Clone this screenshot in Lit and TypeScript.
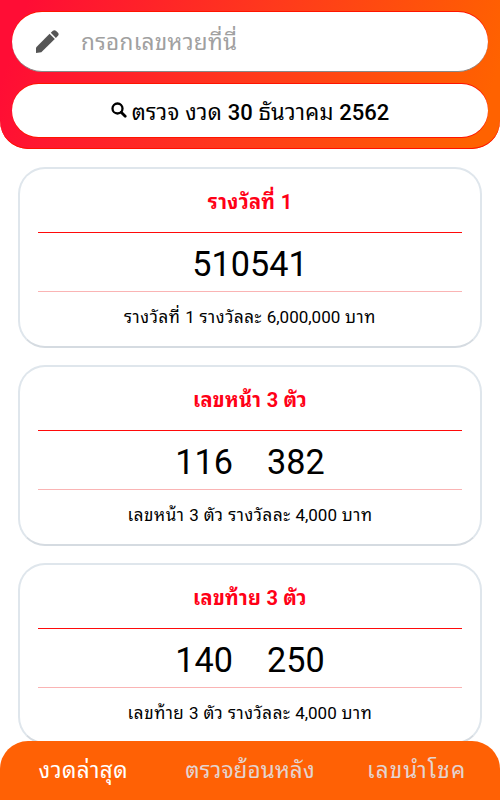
import { LitElement, html, css } from "lit";
import { customElement } from "lit/decorators.js";

interface Prize { title: string; numbers: string[]; note: string; }

const prizes: Prize[] = [
  { title: "รางวัลที่ 1", numbers: ["510541"], note: "รางวัลที่ 1 รางวัลละ 6,000,000 บาท" },
  { title: "เลขหน้า 3 ตัว", numbers: ["116", "382"], note: "เลขหน้า 3 ตัว รางวัลละ 4,000 บาท" },
  { title: "เลขท้าย 3 ตัว", numbers: ["140", "250"], note: "เลขท้าย 3 ตัว รางวัลละ 4,000 บาท" },
];

// Digits keep their natural spacing inside letter-spaced Thai text.
const withDigits = (text: string) =>
  text.split(/([\d,]+)/).map((part, i) => (i % 2 ? html`<span class="digits">${part}</span>` : part));

@customElement("app-root")
export class AppRoot extends LitElement {
  static styles = css`
    :host { display: flex; flex-direction: column; height: 800px; overflow: hidden; background: #fff; color: #000; font-family: Roboto, "Noto Sans Thai Looped", "Noto Looped Thai", "Loma", "Garuda", "Noto Sans Thai", "Noto Sans", sans-serif; }
    * { box-sizing: border-box; }
    .top { flex: none; height: 149px; padding: 12px; background: linear-gradient(108deg, #ff0d35 5%, #ff391c 50%, #ff6200 95%); border-radius: 0 0 28px 28px; box-shadow: inset 0 -1px #ff1000; display: flex; flex-direction: column; gap: 12px; }
    .field { flex: none; height: 60px; border-radius: 30px; border-bottom: 1px solid #888; box-shadow: 0 -1px #ff1400; background: #fff; display: flex; align-items: center; padding: 0 0 4px 24px; gap: 22px; font-size: 22.5px; letter-spacing: 0.3px; color: #a0a0a0; white-space: nowrap; }
    .field svg { margin-top: 4px; }
    .check { flex: none; height: 53px; border-radius: 27px; box-shadow: 0 -1px #ff1400, 0 1px #ff1400; background: #fff; display: flex; align-items: center; justify-content: center; gap: 5px; font-size: 22px; letter-spacing: 0.25px; white-space: nowrap; padding-bottom: 2px; }
    .check b { font-weight: 500; letter-spacing: 0; }
    .list { flex: 1; min-height: 0; overflow: hidden; padding: 18px 18px 0; display: flex; flex-direction: column; gap: 17px; }
    .card { flex: none; height: 181px; border: 2px solid #dfe6ec; border-bottom-color: #d5dbe1; border-radius: 27px; padding: 0 18px; text-align: center; white-space: nowrap; }
    .title { height: 64px; line-height: 66px; color: #ff0016; font-size: 20px; letter-spacing: 0.3px; font-weight: 700; border-bottom: 1px solid #ff0a0a; }
    .digits { letter-spacing: 0; }
    .nums { height: 59px; line-height: 63px; font-size: 34.2px; display: flex; justify-content: center; gap: 34px; border-bottom: 1px solid #fab4b4; }
    .note { line-height: 50px; font-size: 17px; letter-spacing: 0.55px; }
    .tabs { flex: none; height: 59px; background: #ff6105; border-radius: 28px 28px 0 0; display: grid; grid-template-columns: 1fr 1fr 1fr; align-items: center; text-align: center; padding-bottom: 5px; font-size: 22.5px; letter-spacing: 0.1px; color: #e4d4d0; white-space: nowrap; }
    .tabs .on { color: #fff; letter-spacing: 0.45px; }
    .tabs .wide { letter-spacing: 1.1px; }
  `;
  render() {
    return html`
      <header class="top">
        <div class="field"><svg width="23" height="23" viewBox="0 0 23 23" fill="#555"><path d="M13.6 3.8L18.8 9L5.3 22.3L0 23V17.6Z"/><path d="M14.8 2.7L16.9.8Q18.5-.4 20.2 1L22 2.8Q23.3 4.3 22 5.8L19.9 7.9Z"/></svg><span>กรอกเลขหวยที่นี่</span></div>
        <div class="check"><svg width="16" height="16" viewBox="0 0 16 16" fill="none" stroke="#000"><circle cx="6.5" cy="6.5" r="5" stroke-width="2.3"/><path d="M10.2 10.2l4 4" stroke-width="2.8" stroke-linecap="round"/></svg><span>ตรวจ งวด <b>30</b> ธันวาคม <b>2562</b></span></div>
      </header>
      <main class="list">${prizes.map(p => html`<section class="card"><div class="title">${withDigits(p.title)}</div><div class="nums">${p.numbers.map(n => html`<span>${n}</span>`)}</div><div class="note">${withDigits(p.note)}</div></section>`)}</main>
      <nav class="tabs"><span class="on">งวดล่าสุด</span><span>ตรวจย้อนหลัง</span><span class="wide">เลขนำโชค</span></nav>
    `;
  }
}
